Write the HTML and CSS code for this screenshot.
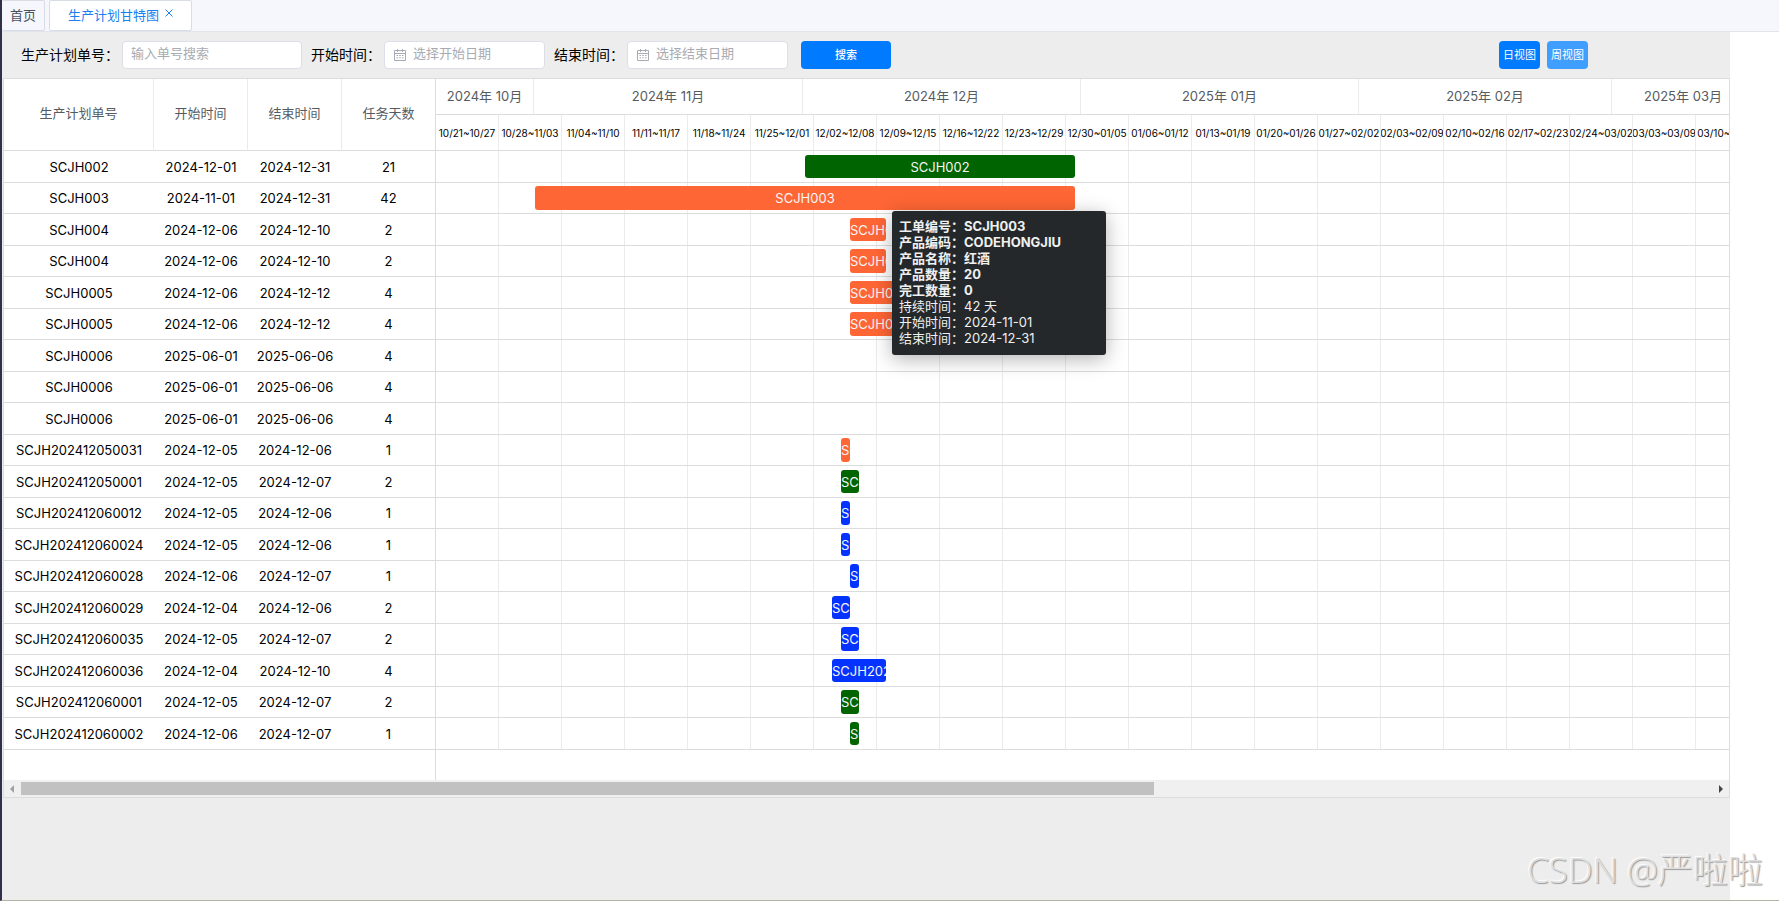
FILE: index.html
```html
<!DOCTYPE html>
<html lang="zh-CN">
<head>
<meta charset="utf-8">
<title>生产计划甘特图</title>
<link rel="stylesheet" href="styles.css">
</head>
<body>
<div class="page">
  <nav class="tabs">
    <a class="tab" href="#home">首页</a>
    <div class="tab tab-active">
      <a class="tab-link" href="#gantt">生产计划甘特图</a>
      <button class="tab-close" type="button" aria-label="关闭"><svg width="8" height="8" viewBox="0 0 8 8"><path d="M0.5 0.5L7.5 7.5M7.5 0.5L0.5 7.5" fill="none" stroke="currentColor"/></svg></button>
    </div>
  </nav>
  <main class="workspace">
    <form class="filters">
      <div class="field">
        <label for="order">生产计划单号：</label>
        <span class="box box-order"><input id="order" type="text" placeholder="输入单号搜索"></span>
      </div>
      <div class="field">
        <label for="start">开始时间：</label>
        <span class="box"><svg class="calendar" width="12" height="12" viewBox="0 0 12 12"><path d="M0.5 1.5H11.5V11.5H0.5ZM0.5 4.5H11.5M3.5 0V3M8.5 0V3M2.5 6.5H4M5.2 6.5H6.8M8 6.5H9.5M2.5 8.8H4M5.2 8.8H6.8M8 8.8H9.5" fill="none" stroke="currentColor"/></svg><input id="start" type="text" placeholder="选择开始日期"></span>
      </div>
      <div class="field">
        <label for="end">结束时间：</label>
        <span class="box"><svg class="calendar" width="12" height="12" viewBox="0 0 12 12"><path d="M0.5 1.5H11.5V11.5H0.5ZM0.5 4.5H11.5M3.5 0V3M8.5 0V3M2.5 6.5H4M5.2 6.5H6.8M8 6.5H9.5M2.5 8.8H4M5.2 8.8H6.8M8 8.8H9.5" fill="none" stroke="currentColor"/></svg><input id="end" type="text" placeholder="选择结束日期"></span>
      </div>
      <button class="btn btn-search" type="button">搜索</button>
      <div class="views">
        <button class="btn" type="button">日视图</button>
        <button class="btn btn-light" type="button">周视图</button>
      </div>
    </form>

    <section class="gantt">
      <div class="panes">
        <div class="plan">
          <table class="plan-table">
            <colgroup><col class="col-order"><col class="col-date"><col class="col-date"><col></colgroup>
            <thead><tr><th>生产计划单号</th><th>开始时间</th><th>结束时间</th><th>任务天数</th></tr></thead>
            <tbody>
              <tr><td>SCJH002</td><td>2024-12-01</td><td>2024-12-31</td><td>21</td></tr>
              <tr><td>SCJH003</td><td>2024-11-01</td><td>2024-12-31</td><td>42</td></tr>
              <tr><td>SCJH004</td><td>2024-12-06</td><td>2024-12-10</td><td>2</td></tr>
              <tr><td>SCJH004</td><td>2024-12-06</td><td>2024-12-10</td><td>2</td></tr>
              <tr><td>SCJH0005</td><td>2024-12-06</td><td>2024-12-12</td><td>4</td></tr>
              <tr><td>SCJH0005</td><td>2024-12-06</td><td>2024-12-12</td><td>4</td></tr>
              <tr><td>SCJH0006</td><td>2025-06-01</td><td>2025-06-06</td><td>4</td></tr>
              <tr><td>SCJH0006</td><td>2025-06-01</td><td>2025-06-06</td><td>4</td></tr>
              <tr><td>SCJH0006</td><td>2025-06-01</td><td>2025-06-06</td><td>4</td></tr>
              <tr><td>SCJH202412050031</td><td>2024-12-05</td><td>2024-12-06</td><td>1</td></tr>
              <tr><td>SCJH202412050001</td><td>2024-12-05</td><td>2024-12-07</td><td>2</td></tr>
              <tr><td>SCJH202412060012</td><td>2024-12-05</td><td>2024-12-06</td><td>1</td></tr>
              <tr><td>SCJH202412060024</td><td>2024-12-05</td><td>2024-12-06</td><td>1</td></tr>
              <tr><td>SCJH202412060028</td><td>2024-12-06</td><td>2024-12-07</td><td>1</td></tr>
              <tr><td>SCJH202412060029</td><td>2024-12-04</td><td>2024-12-06</td><td>2</td></tr>
              <tr><td>SCJH202412060035</td><td>2024-12-05</td><td>2024-12-07</td><td>2</td></tr>
              <tr><td>SCJH202412060036</td><td>2024-12-04</td><td>2024-12-10</td><td>4</td></tr>
              <tr><td>SCJH202412060001</td><td>2024-12-05</td><td>2024-12-07</td><td>2</td></tr>
              <tr><td>SCJH202412060002</td><td>2024-12-06</td><td>2024-12-07</td><td>1</td></tr>
            </tbody>
          </table>
        </div>
        <div class="timeline">
          <div class="months">
            <div class="month" style="width:98px">2024年 10月</div>
            <div class="month" style="width:269px">2024年 11月</div>
            <div class="month" style="width:278px">2024年 12月</div>
            <div class="month" style="width:278px">2025年 01月</div>
            <div class="month" style="width:253px">2025年 02月</div>
            <div class="month" style="width:143px">2025年 03月</div>
          </div>
          <div class="weeks">
            <div class="week">10/21~10/27</div><div class="week">10/28~11/03</div><div class="week">11/04~11/10</div><div class="week">11/11~11/17</div><div class="week">11/18~11/24</div><div class="week">11/25~12/01</div><div class="week">12/02~12/08</div><div class="week">12/09~12/15</div><div class="week">12/16~12/22</div><div class="week">12/23~12/29</div><div class="week">12/30~01/05</div><div class="week">01/06~01/12</div><div class="week">01/13~01/19</div><div class="week">01/20~01/26</div><div class="week">01/27~02/02</div><div class="week">02/03~02/09</div><div class="week">02/10~02/16</div><div class="week">02/17~02/23</div><div class="week">02/24~03/02</div><div class="week">03/03~03/09</div><div class="week">03/10~03/16</div>
          </div>
          <div class="lanes">
            <div class="lane"><div class="bar green" style="--start:41;--days:30">SCJH002</div></div>
            <div class="lane"><div class="bar orange" style="--start:11;--days:60">SCJH003</div></div>
            <div class="lane"><div class="bar orange" style="--start:46;--days:4">SCJH004</div></div>
            <div class="lane"><div class="bar orange" style="--start:46;--days:4">SCJH004</div></div>
            <div class="lane"><div class="bar orange" style="--start:46;--days:6">SCJH0005</div></div>
            <div class="lane"><div class="bar orange" style="--start:46;--days:6">SCJH0005</div></div>
            <div class="lane"></div>
            <div class="lane"></div>
            <div class="lane"></div>
            <div class="lane"><div class="bar orange" style="--start:45;--days:1">SCJH202412050031</div></div>
            <div class="lane"><div class="bar green" style="--start:45;--days:2">SCJH202412050001</div></div>
            <div class="lane"><div class="bar blue" style="--start:45;--days:1">SCJH202412060012</div></div>
            <div class="lane"><div class="bar blue" style="--start:45;--days:1">SCJH202412060024</div></div>
            <div class="lane"><div class="bar blue" style="--start:46;--days:1">SCJH202412060028</div></div>
            <div class="lane"><div class="bar blue" style="--start:44;--days:2">SCJH202412060029</div></div>
            <div class="lane"><div class="bar blue" style="--start:45;--days:2">SCJH202412060035</div></div>
            <div class="lane"><div class="bar blue" style="--start:44;--days:6">SCJH202412060036</div></div>
            <div class="lane"><div class="bar green" style="--start:45;--days:2">SCJH202412060001</div></div>
            <div class="lane"><div class="bar green" style="--start:46;--days:1">SCJH202412060002</div></div>
            <div class="tooltip" role="tooltip">
              <b>工单编号：SCJH003</b>
              <b>产品编码：CODEHONGJIU</b>
              <b>产品名称：红酒</b>
              <b>产品数量：20</b>
              <b>完工数量：0</b>
              <span>持续时间：42 天</span>
              <span>开始时间：2024-11-01</span>
              <span>结束时间：2024-12-31</span>
            </div>
          </div>
        </div>
      </div>
      <div class="scrollbar">
        <svg class="arrow arrow-left" width="4" height="8" viewBox="0 0 4 8"><path d="M4 0V8L0 4Z" fill="currentColor"/></svg>
        <div class="track"><div class="thumb"></div></div>
        <svg class="arrow" width="4" height="8" viewBox="0 0 4 8"><path d="M0 0V8L4 4Z" fill="currentColor"/></svg>
      </div>
    </section>
  </main>
  <div class="watermark">CSDN @严啦啦</div>
</div>
</body>
</html>
```

FILE: styles.css
```css
* {
  box-sizing: border-box;
}

body {
  margin: 0;
  background: #fff;
  color: #000;
  font: 13px/16px Inter, "Noto Sans CJK SC", sans-serif;
}

button,
input {
  font: inherit;
}

.page {
  position: relative;
  display: flex;
  flex-direction: column;
  min-height: 100vh;
  border-left: 2px solid #2f3148;
  border-bottom: 1px solid #b0b5a0;
}

/* Tabs */

.tabs {
  display: flex;
  gap: 4px;
  height: 32px;
  background: #f5f7fc;
  border-bottom: 1px solid #e1e4eb;
}

.tab {
  display: flex;
  align-items: center;
  height: 31px;
  padding: 0 8px 2px;
  border: 1px solid #d8dce5;
  border-left: 0;
  border-radius: 2px;
  color: #495060;
  text-decoration: none;
}

.tab-active {
  gap: 6px;
  padding: 0 18px 2px;
  border-left: 1px solid #d8dce5;
  background: #fff;
}

.tab-link {
  color: #1a80f0;
  text-decoration: none;
}

.tab-close {
  display: flex;
  padding: 0 0 4px;
  border: 0;
  background: none;
  color: #1a80f0;
}

/* Filters */

.workspace {
  flex: 1;
  margin-right: 49px;
  background: #ededed;
}

.filters {
  display: flex;
  align-items: center;
  gap: 9px;
  height: 46px;
  padding-left: 19px;
}

.field {
  display: flex;
  align-items: center;
  gap: 3px;
  font-size: 14px;
  white-space: nowrap;
}

.box {
  display: flex;
  align-items: center;
  gap: 7px;
  width: 161px;
  height: 28px;
  padding: 0 9px;
  border: 1px solid #dcdfe8;
  border-radius: 4px;
  background: #fff;
  font-size: 13px;
}

.box-order {
  width: 180px;
  padding: 0 8px;
}

.box input {
  flex: 1;
  min-width: 0;
  padding: 0 0 4px;
  border: 0;
  outline: 0;
  background: none;
}

.box input::placeholder {
  color: #a8abb2;
}

.calendar {
  color: #a8abb2;
}

.btn {
  height: 28px;
  padding: 0;
  width: 41px;
  border: 0;
  border-radius: 4px;
  background: #007bff;
  color: #fff;
  font-size: 11px;
  white-space: nowrap;
}

.btn-search {
  width: 90px;
  margin-left: 4px;
  font-weight: 500;
}

.btn-light {
  background: #409eff;
}

.views {
  display: flex;
  gap: 7px;
  margin-left: auto;
  margin-right: 142px;
}

/* Gantt */

.gantt {
  margin-left: 1px;
  border: 1px solid #dcdcdc;
  background: #fff;
}

.panes {
  display: flex;
}

.plan {
  flex: none;
  width: 432px;
  padding-bottom: 30px;
  border-right: 1px solid #dcdcdc;
}

.plan-table {
  width: 100%;
  table-layout: fixed;
  border-collapse: separate;
  border-spacing: 0;
  text-align: center;
}

.col-order {
  width: 150px;
}

.col-date {
  width: 94px;
}

.plan-table th {
  height: 72px;
  padding: 0 0 3px;
  border-right: 1px solid #ebebeb;
  border-bottom: 1px solid #dcdcdc;
  color: #555b61;
  font-weight: 400;
}

.plan-table th:last-child {
  border-right: 0;
}

.plan-table td {
  height: 31px;
  padding: 0;
  border-bottom: 1px solid #dcdcdc;
}

.plan-table tr:nth-child(odd) td {
  height: 32px;
}

.timeline {
  flex: 1;
  min-width: 0;
  overflow: hidden;
}

.months,
.weeks {
  display: flex;
  height: 36px;
  border-bottom: 1px solid #dcdcdc;
}

.month,
.week {
  flex: none;
  display: flex;
  align-items: center;
  justify-content: center;
  border-right: 1px solid #ebebeb;
  white-space: nowrap;
}

.month {
  padding-bottom: 2px;
  color: #555b61;
}

.week {
  width: 63px;
  overflow: hidden;
  font-size: 10px;
}

.lanes {
  position: relative;
}

.lane {
  display: flex;
  height: 31px;
  padding: 3px 0;
  border-bottom: 1px solid #dcdcdc;
  background: repeating-linear-gradient(to right, transparent 0 62px, #ebebeb 62px 63px);
}

.lane:nth-child(odd) {
  height: 32px;
  padding: 4px 0;
}

.bar {
  display: flex;
  flex: none;
  align-items: center;
  justify-content: safe center;
  width: calc(var(--days) * 9px);
  margin-left: calc(var(--start) * 9px);
  border-radius: 3px;
  overflow: hidden;
  color: #f5f5f5;
  white-space: nowrap;
}

.green {
  background: #006400;
}

.orange {
  background: #ff6635;
}

.blue {
  background: #0433ff;
}

.tooltip {
  position: absolute;
  top: 60px;
  left: 456px;
  display: flex;
  flex-direction: column;
  width: 214px;
  height: 144px;
  padding: 7px;
  border-radius: 3px;
  background: #24282b;
  box-shadow: 0 4px 20px rgba(0, 0, 0, 0.3);
  color: #f0f0f0;
}

/* Scrollbar */

.scrollbar {
  display: flex;
  align-items: center;
  gap: 7px;
  height: 17px;
  padding: 0 6px;
  background: #f0f0f0;
  color: #444;
}

.arrow-left {
  color: #a0a0a0;
}

.track {
  flex: 1;
}

.thumb {
  width: 67%;
  height: 13px;
  background: #c1c1c1;
}

.watermark {
  position: absolute;
  right: 16px;
  bottom: 8px;
  color: #dedede;
  font: 300 35px/44px "Open Sans", "Noto Sans CJK SC", sans-serif;
  text-shadow: 1px 1px 1px #999, -1px -1px 1px #fff;
}
```
